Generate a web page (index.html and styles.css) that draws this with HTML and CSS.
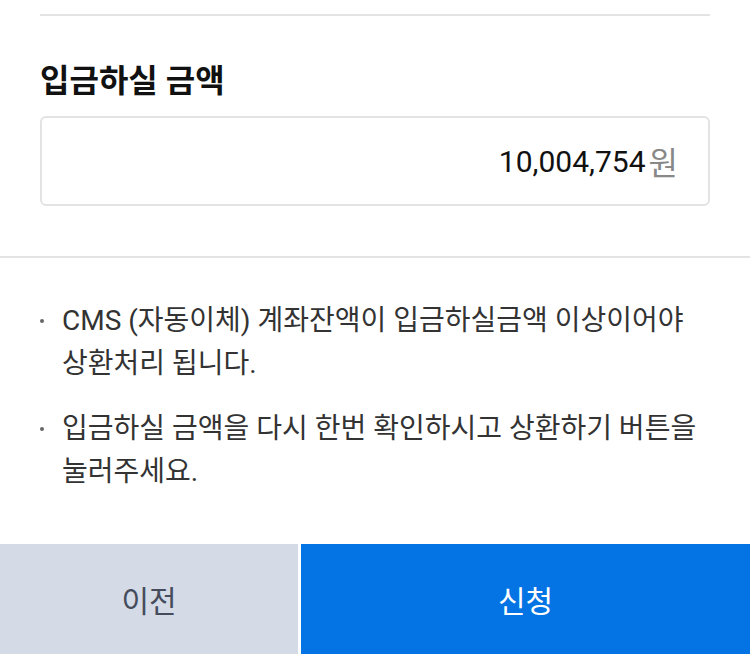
FILE: index.html
```html
<!DOCTYPE html>
<html lang="ko">
<head>
  <meta charset="UTF-8" />
  <meta name="viewport" content="width=device-width, initial-scale=1.0"/>
  <title>입금하실 금액</title>
  <link rel="stylesheet" href="styles.css">
</head>
<body>
  <div class="page">
    <div class="amount-section">
      <div class="top-rule"></div>
      <h2 class="title">입금하실 금액</h2>
      <div class="amount-box">
        <span class="amount">10,004,754</span><span class="unit">원</span>
      </div>
    </div>

    <ul class="notes">
      <li>CMS (자동이체) 계좌잔액이 입금하실금액 이상이어야 상환처리 됩니다.</li>
      <li>입금하실 금액을 다시 한번 확인하시고 상환하기 버튼을 눌러주세요.</li>
    </ul>

    <div class="actions">
      <button class="btn btn-prev">이전</button>
      <button class="btn btn-submit">신청</button>
    </div>
  </div>
</body>
</html>
```

FILE: styles.css
```css
html, body {
  margin: 0;
  padding: 0;
  background: #fff;
}
body {
  font-family: Roboto, "Noto Sans CJK KR", sans-serif;
  color: #222;
}
.page {
  height: 654px;
  display: flex;
  flex-direction: column;
}
.amount-section {
  padding: 0 40px 50px;
  border-bottom: 2px solid #e3e3e3;
}
.top-rule {
  margin-top: 14px;
  height: 2px;
  background: #e3e3e3;
}
.title {
  margin: 43px 0 0;
  font-size: 32px;
  font-weight: bold;
  color: #111;
  line-height: 44px;
}
.amount-box {
  margin-top: 13px;
  height: 86px;
  border: 2px solid #e3e3e3;
  border-radius: 6px;
  display: flex;
  align-items: center;
  justify-content: flex-end;
  padding: 0 30px;
}
.amount {
  font-size: 30px;
  color: #111;
}
.unit {
  font-size: 32px;
  color: #888;
  margin-left: 3px;
}
.notes {
  list-style: none;
  margin: 0;
  padding: 41px 40px 0;
}
.notes li {
  position: relative;
  padding-left: 22px;
  font-size: 28px;
  line-height: 43px;
  color: #333;
  margin-bottom: 22px;
}
.notes li::before {
  content: "";
  position: absolute;
  left: 0;
  top: 20px;
  width: 4px;
  height: 4px;
  border-radius: 50%;
  background: #666;
}
.actions {
  margin-top: auto;
  display: flex;
  gap: 3px;
  height: 110px;
}
.btn {
  border: 0;
  margin: 0;
  font-family: inherit;
  font-size: 30px;
}
.btn-prev {
  width: 298px;
  background: #d4dae6;
  color: #454c5b;
}
.btn-submit {
  flex: 1;
  background: #0473e3;
  color: #fff;
}
```
